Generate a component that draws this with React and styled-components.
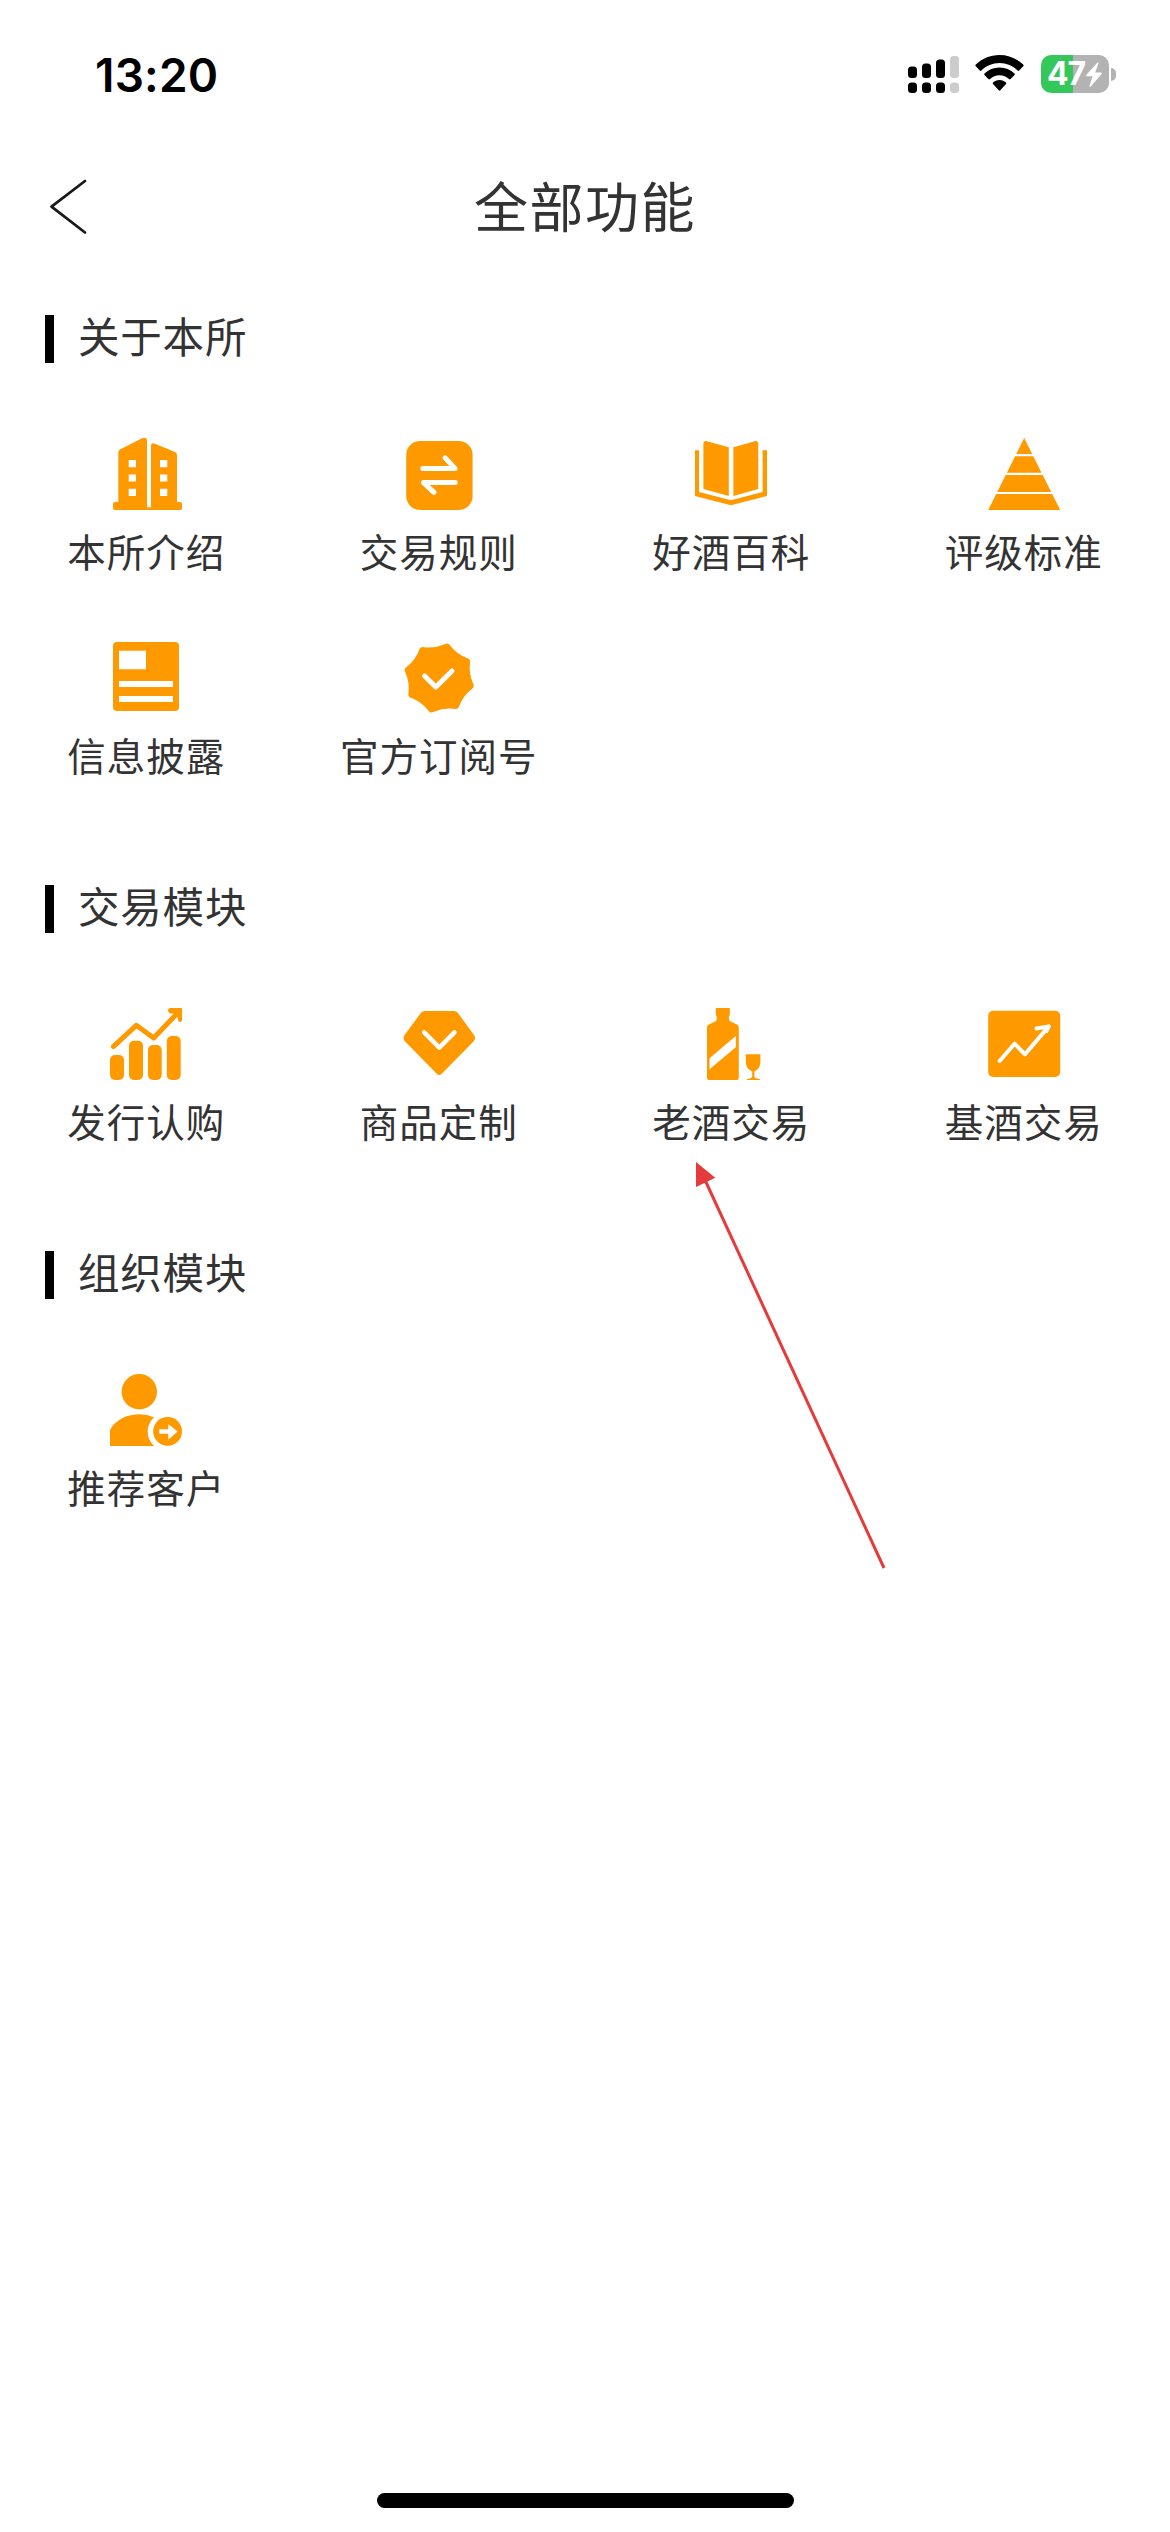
import React from 'react';
import styled, { createGlobalStyle } from 'styled-components';

const ORANGE = '#ff9900';

const GlobalStyle = createGlobalStyle`
  * { box-sizing: border-box; }
  body { margin: 0; background: #fff; }
`;

const Screen = styled.div`
  position: relative;
  display: flex;
  flex-direction: column;
  width: 1170px;
  height: 2532px;
  overflow: hidden;
  background: #fff;
  color: #333;
  font-family: 'Noto Sans CJK SC', sans-serif;
`;

const StatusBar = styled.header`
  display: flex;
  justify-content: space-between;
  align-items: center;
  height: 138px;
  padding: 10px 54px 0 95px;
  color: #000;
`;

const Time = styled.time`
  padding-top: 2px;
  font: 600 46px/54px Inter, sans-serif;
  letter-spacing: 0.2px;
`;

const StatusIcons = styled.div`
  display: flex;
  align-items: center;
  gap: 16.5px;
`;

const BatteryWrap = styled.div`
  display: flex;
  align-items: center;
  gap: 2.5px;
`;

const BatteryBody = styled.div`
  display: flex;
  align-items: center;
  justify-content: center;
  gap: 1px;
  width: 68px;
  height: 38px;
  border-radius: 10px;
  background: linear-gradient(90deg, #34c759 ${(p) => p.$level}%, #b3b3b3 ${(p) => p.$level}%);
  color: #fff;
  font: 700 32px/38px Inter, sans-serif;
  letter-spacing: -1px;
`;

const BatteryCap = styled.span`
  width: 5px;
  height: 13px;
  border-radius: 0 6px 6px 0;
  background: #b3b3b3;
`;

const NavBar = styled.nav`
  display: grid;
  grid-template-columns: 1fr auto 1fr;
  align-items: center;
  height: 138px;
  padding: 0 48px;
`;

const BackButton = styled.button`
  display: flex;
  width: 42px;
  padding: 0;
  border: 0;
  background: none;
`;

const Title = styled.h1`
  margin: 0;
  padding-bottom: 5px;
  font-size: 54px;
  font-weight: 400;
  line-height: 72px;
  letter-spacing: 1.5px;
`;

const Section = styled.section`
  padding-top: 39px;
`;

const SectionTitle = styled.h2`
  display: flex;
  align-items: center;
  gap: 24px;
  height: 48px;
  margin: 0 0 75px 45px;
  font-size: 41.5px;
  font-weight: 400;
  line-height: 41px;
  letter-spacing: 0.8px;

  &::before {
    content: '';
    width: 9px;
    height: 48px;
    background: #000;
  }
`;

const SectionName = styled.span`
  padding-bottom: 7px;
`;

const Grid = styled.div`
  display: grid;
  grid-template-columns: repeat(4, 1fr);
  grid-auto-rows: 204px;
`;

const Item = styled.a`
  display: flex;
  flex-direction: column;
  align-items: center;
  gap: 19px;
`;

const ItemIcon = styled.svg`
  width: 72px;
  height: 72px;
  overflow: visible;
  fill: ${ORANGE};
`;

const Label = styled.span`
  font-size: 38.5px;
  line-height: 42px;
  letter-spacing: 1px;
  white-space: nowrap;
`;

const HomeIndicator = styled.div`
  width: 417px;
  height: 15px;
  margin: auto auto 24px;
  border-radius: 8px;
  background: #000;
`;

const Pointer = styled.svg`
  position: absolute;
  left: 690px;
  top: 1156px;
  width: 200px;
  height: 418px;
`;

const Line = styled.path`
  fill: none;
  stroke: ${(p) => p.$color || '#fff'};
  stroke-width: ${(p) => p.$width || 5};
  stroke-linecap: round;
  stroke-linejoin: round;
`;

const polar = (r, deg) => {
  const a = (deg * Math.PI) / 180;
  return `${(36.2 + r * Math.cos(a)).toFixed(2)} ${(36 + r * Math.sin(a)).toFixed(2)}`;
};

const badgePath = Array.from({ length: 8 }, (_, i) => {
  const tip = 14 + i * 45;
  return `${i ? 'L' : 'M'}${polar(34.2, tip - 5)}Q${polar(37, tip)} ${polar(34.2, tip + 5)}Q${polar(29.8, tip + 22.5)} ${polar(34.2, tip + 40)}`;
}).join('') + 'Z';

const icons = {
  building: (
    <>
      <path d="M8.3 64V14.5Q8.3 12.6 10 11.6L32 .3Q37 -1.8 37 3V69.3H41V8Q41 4 45 5.8L65 14Q67 15 67 17V64H70Q72 64 72 66V70Q72 72 70 72H5Q3 72 3 70V66Q3 64 5 64Z" />
      <path fill="#fff" d="M18.7 22h7.3v7.2h-7.3zM18.7 36.4h7.3v7.2h-7.3zM18.7 50.7h7.3v7.2h-7.3zM50 22h7.3v7.2H50zM50 36.4h7.3v7.2H50zM50 50.7h7.3v7.2H50z" />
    </>
  ),
  exchange: (
    <>
      <rect x="3.2" y="3" width="66.4" height="69" rx="14" />
      <Line d="M19.8 30.4H52L42 19.8M52.2 44.6H20.5L31 54.4" />
    </>
  ),
  book: (
    <>
      <path d="M0 12.3H4V54L36 62.2L67.6 54V12.3H72V58L38 66.8Q36 67.4 34 66.8L0 58Z" />
      <path d="M8.4 6Q8.4 2.5 11.8 3.2L33.8 9.3V58L8.4 51ZM38.4 9.3L59.8 3.2Q63.2 2.5 63.2 6V51L38.4 58Z" />
    </>
  ),
  pyramid: (
    <path d="M36.2 0L44.2 16H28.2ZM27.1 18.3H45.3L53.5 34.7H18.9ZM17.7 37H54.7L63.2 54H9.2ZM8.2 56H64.2L72.2 72H.2Z" />
  ),
  article: (
    <>
      <rect x="3" width="66" height="69" rx="4" />
      <path fill="#fff" d="M9 8.7h27v18.6H9zM9 39h54v6H9zM9 54h54v6H9z" />
    </>
  ),
  badge: (
    <>
      <path d={badgePath} />
      <Line d="M21.6 34L32.8 45L49 29" />
    </>
  ),
  growth: (
    <>
      <rect y="47" width="14" height="25" rx="5" />
      <rect x="19" y="32.7" width="14" height="39.3" rx="5" />
      <rect x="38" y="37" width="13.7" height="35" rx="5" />
      <rect x="56.8" y="28" width="13.9" height="44" rx="5" />
      <Line $color={ORANGE} d="M3.3 38.6L26.3 17.3L43.7 30L67.5 5" />
      <path d="M60 0H71Q72 0 72 1V12Q72 14 70 14Q68.2 14 68 12L67.5 9L63 5.6H60.5Q58 5 58 2.8Q58 .2 60 0Z" />
    </>
  ),
  gem: (
    <>
      <path d="M22 3H51Q53.3 3 54.8 4.8L71 27Q73 30 71 33L39 65.6Q36.2 68.6 33.5 65.6L1.6 33Q-.4 30 1.6 27L18 4.8Q19.5 3 22 3Z" />
      <Line $width={4.4} d="M21.2 24.4L36.3 39.6L51.5 24.4" />
    </>
  ),
  bottle: (
    <>
      <path d="M20.8 0H34.8V6Q34.8 8 33.9 8.5V11Q33.9 12.5 35 13.2L42 16.4Q43.8 17.4 43.8 19.4V70Q43.8 72 41.8 72H14Q12 72 12 70V19.4Q12 17.4 13.8 16.4L20.6 13.2Q21.7 12.5 21.7 11V8.5Q20.8 8 20.8 6Z" />
      <path fill="#fff" d="M14.5 50.3L40.8 28V39.3L14.5 61.3Z" />
      <path d="M50.8 46.3H65.4V54Q65.4 60.5 59.4 63.5V69Q60 70.5 64.8 71V72H52V71Q56.5 70.5 57.2 69V63.5Q50.8 60.5 50.8 54Z" />
    </>
  ),
  trend: (
    <>
      <rect x=".2" y="2.8" width="72" height="66.2" rx="5" />
      <Line $width={4} d="M11.6 53L26.6 35.7L37 46.3L60.8 18.4L48.5 20.5M60.8 18.4L58.5 23" />
    </>
  ),
  referral: (
    <>
      <circle cx="29.3" cy="17.7" r="17.7" />
      <path d="M0 72V56C6 45 18 40.3 29.3 40.3Q37 40.3 44 43.2A19.5 19.5 0 0 0 44 72Z" />
      <circle cx="57.6" cy="57.4" r="14.4" />
      <path fill="#fff" d="M49.3 55.3H58.3V50L67.6 57.6L58.3 65.8V59.7H49.3Z" />
    </>
  ),
};

const sections = [
  {
    title: '关于本所',
    items: [
      ['building', '本所介绍'],
      ['exchange', '交易规则'],
      ['book', '好酒百科'],
      ['pyramid', '评级标准'],
      ['article', '信息披露'],
      ['badge', '官方订阅号'],
    ],
  },
  {
    title: '交易模块',
    items: [
      ['growth', '发行认购'],
      ['gem', '商品定制'],
      ['bottle', '老酒交易'],
      ['trend', '基酒交易'],
    ],
  },
  { title: '组织模块', items: [['referral', '推荐客户']] },
];

const Signal = () => (
  <svg width="51" height="38" viewBox="0 0 51 38">
    <rect y="11.5" width="9" height="11.5" rx="3.5" />
    <rect x="14" y="8.5" width="9" height="14.5" rx="3.5" />
    <rect x="28" y="4.5" width="9" height="18.5" rx="3.5" />
    <rect x="42" y="1" width="9" height="22" rx="3.5" fill="#ccc" />
    <rect y="27.5" width="9" height="10.5" rx="3.5" />
    <rect x="14" y="27.5" width="9" height="10.5" rx="3.5" />
    <rect x="28" y="27.5" width="9" height="10.5" rx="3.5" />
    <rect x="42" y="27.5" width="9" height="10.5" rx="3.5" fill="#ccc" />
  </svg>
);

const Wifi = () => (
  <svg width="49" height="38" viewBox="0 0 49 38">
    <path d="M24.5 0C33.8 0 42 3.6 48.2 9.6Q49 10.4 48.2 11.2L44.2 15.4Q43.4 16.2 42.6 15.4C37.600 10.800 31.600 8 24.500 8S11.400 10.800 6.400 15.400Q5.600 16.200 4.800 15.400L.8 11.200Q0 10.400 .8 9.600C7 3.600 15.200 0 24.500 0Z" />
    <path d="M24.500 12.500C30.400 12.500 35.500 14.700 39.500 18.400Q40.300 19.200 39.500 20L35.600 24.100Q34.800 24.800 34 24.100C31.400 21.700 28.300 20.300 24.500 20.300S17.600 21.700 15 24.100Q14.200 24.800 13.400 24.100L9.500 20Q8.700 19.200 9.500 18.400C13.500 14.700 18.600 12.500 24.500 12.500Z" />
    <path d="M24.500 25C27.200 25 29.300 25.900 31 27.400Q31.700 28.100 31 28.900L25.300 35.300Q24.500 36 23.700 35.300L18 28.900Q17.300 28.100 18 27.400C19.700 25.900 21.800 25 24.500 25Z" />
  </svg>
);

const Battery = () => (
  <BatteryWrap>
    <BatteryBody $level={47}>
      47
      <svg width="16" height="25" viewBox="0 0 16 25">
        <path fill="#fff" d="M11.500 .5L.4 12.700Q-.2 14 1.200 14.200H6.500L3.300 24.300Q3.800 25.200 4.800 24.400L15.600 12Q16.200 10.600 14.600 10.400H9.300L12.600 1Q12.400 0 11.500 .5Z" />
      </svg>
    </BatteryBody>
    <BatteryCap />
  </BatteryWrap>
);

export default function App() {
  return (
    <Screen>
      <GlobalStyle />
      <StatusBar>
        <Time>13:20</Time>
        <StatusIcons>
          <Signal />
          <Wifi />
          <Battery />
        </StatusIcons>
      </StatusBar>
      <NavBar>
        <BackButton aria-label="返回">
          <svg width="42" height="60" viewBox="0 0 42 60">
            <Line $color="#1a1a1a" $width={2.8} d="M37 4L3.500 29.700L37 55.500" />
          </svg>
        </BackButton>
        <Title>全部功能</Title>
      </NavBar>
      <main>
        {sections.map((section) => (
          <Section key={section.title}>
            <SectionTitle>
              <SectionName>{section.title}</SectionName>
            </SectionTitle>
            <Grid>
              {section.items.map(([icon, label]) => (
                <Item key={label}>
                  <ItemIcon viewBox="0 0 72 72">{icons[icon]}</ItemIcon>
                  <Label>{label}</Label>
                </Item>
              ))}
            </Grid>
          </Section>
        ))}
      </main>
      <HomeIndicator />
      <Pointer viewBox="0 0 200 418">
        <path d="M15 24L194 412" stroke="#e53b3d" strokeWidth="3" />
        <path d="M6 6V31L25.300 21.700Z" fill="#e53b3d" />
      </Pointer>
    </Screen>
  );
}
